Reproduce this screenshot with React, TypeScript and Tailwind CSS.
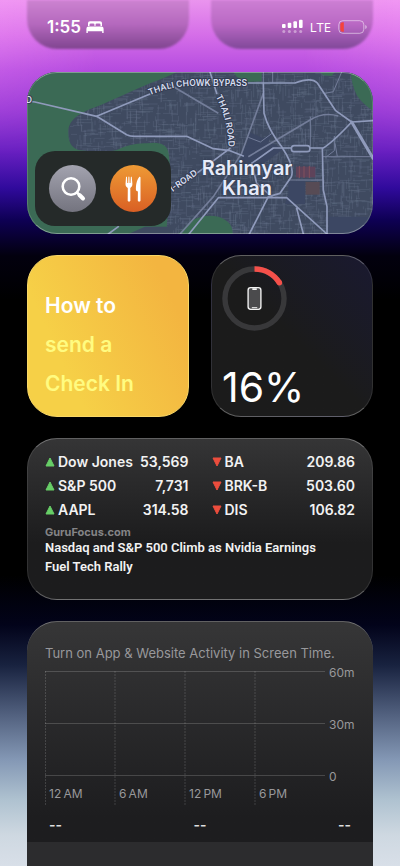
const stocksUp = [
  { symbol: 'Dow Jones', price: '53,569' },
  { symbol: 'S&P 500', price: '7,731' },
  { symbol: 'AAPL', price: '314.58' },
];

const stocksDown = [
  { symbol: 'BA', price: '209.86' },
  { symbol: 'BRK-B', price: '503.60' },
  { symbol: 'DIS', price: '106.82' },
];

// thin spaces keep the hour and the suffix close together
const hours = ['12\u2009AM', '6\u2009AM', '12\u2009PM', '6\u2009PM'];

// small street grid for the city area, seeded so it never changes
function buildStreets() {
  let seed = 7;
  const rand = () => {
    seed = (seed * 16807) % 2147483647;
    return seed / 2147483647;
  };
  let d = '';
  for (let i = 0; i < 2600; i++) {
    const x = Math.round(200 + rand() * 920);
    const y = Math.round(66 + rand() * 486);
    const len = Math.round(8 + rand() * 36);
    d += rand() > 0.5 ? `M${x} ${y}h${len}` : `M${x} ${y}v${len}`;
  }
  return d;
}

const streets = buildStreets();

function CityMap() {
  return (
    <svg
      className="absolute inset-0 h-full w-full"
      viewBox="81 66 1038 486"
      preserveAspectRatio="xMidYMid slice"
      aria-hidden="true"
    >
      <rect x="81" y="66" width="1038" height="486" fill="#3f4a60" />
      <path d={streets} stroke="#65738a" strokeOpacity="0.5" strokeWidth="2" fill="none" />
      <g fill="#3c4763">
        <path d="M735 285l75-8 40 20-70 50-60-10z" />
        <path d="M865 392h50v70h-60l10-30z" />
        <path d="M985 500h134v52H985z" />
        <path d="M745 245l45 20 30-20-20 40-60 5z" />
      </g>
      <g fill="#3b6a55">
        <path d="M81 66H530Q500 82 450 100C390 125 330 155 285 172C240 188 205 210 205 245C205 275 212 290 235 300Q310 310 350 300Q395 278 440 280Q500 270 506 310L510 350L500 540L400 552H81z" />
        <path d="M700 66h85v28l-45 2-30-16z" />
        <path d="M960 66h45l-10 12-25-2z" />
        <path d="M1052 66H1119V182Q1085 160 1070 135Q1055 105 1052 66z" />
        <path d="M535 552L570 515Q610 490 655 500Q700 515 698 552z" />
      </g>
      <path d="M385 552l50-22h75l40-20-40 42z" fill="#3f4a60" />
      <rect x="888" y="350" width="58" height="32" fill="#5e435a" />
      <path d="M898 348v36M912 348v36M928 348v36" stroke="#82505c" strokeWidth="3" />
      <rect x="917" y="396" width="42" height="38" fill="#574b55" />
      <g fill="none" stroke="#737d99" strokeWidth="5" strokeLinejoin="round">
        <path d="M500 98L655 190" />
        <path d="M540 552L640 440L725 310L790 130" />
        <path d="M745 320L930 210Q970 185 1015 198" />
        <path d="M745 262l36 14 35-26M1003 258v44l-26 20" strokeWidth="3" />
        <path d="M931 200V290M818 66V98M865 390H968M968 320H1119M790 66V98M1005 280L1012 320" strokeWidth="3" />
        <path d="M1025 66L1000 125L975 130" strokeWidth="3" />
      </g>
      <g fill="none" stroke="#8f9abb" strokeWidth="5" strokeLinejoin="round" strokeLinecap="round">
        <path d="M81 153L105 156L290 199L450 132" />
        <path d="M290 199L380 254Q390 259 405 259H560L640 296L690 302L730 318" />
        <path d="M745 99H885Q935 80 952 99L1007 182L1055 216L1119 212" />
        <path d="M1055 216L1119 325" strokeWidth="9" />
        <path d="M1055 216Q1000 275 970 294H820L755 340" />
        <path d="M790 99L792 190Q805 240 845 290Q885 350 874 380L840 430L805 440L748 552" />
        <path d="M630 66L650 130M690 295L590 370" />
        <path d="M967 296L970 420L981 470V552" />
        <path d="M567 552L655 443H860L981 552M890 475L910 552" />
        <path d="M755 340L770 400L815 440" />
        <path d="M325 552L355 530" />
      </g>
      <rect x="874" y="287" width="56" height="18" rx="9" fill="#3f4a60" stroke="#8f9abb" strokeWidth="5" />
      <defs>
        <path id="bypass" d="M449 136Q510 110 570 108L800 108" />
        <path id="thali" d="M647 140Q686 210 686 310" />
        <path id="road" d="M518 426L620 354" />
      </defs>
      <g
        fill="#d8def0"
        stroke="#333c52"
        strokeWidth="6"
        paintOrder="stroke"
        strokeLinejoin="round"
        className="font-['Inter',sans-serif] text-[26px] font-semibold"
      >
        <text><textPath href="#bypass">THALI CHOWK BYPASS</textPath></text>
        <text><textPath href="#thali">THALI ROAD</textPath></text>
        <text><textPath href="#road">I-ROAD</textPath></text>
        <text x="77" y="159">D</text>
      </g>
    </svg>
  );
}

function MapWidget() {
  return (
    <section className="relative flex h-[162px] items-end overflow-hidden rounded-[30px] p-2">
      <CityMap />
      <div className="relative flex h-[75px] w-[136px] items-center justify-center gap-[14px] rounded-[20px] bg-[#252a29]">
        <button
          aria-label="Search"
          className="flex size-[47px] items-center justify-center rounded-full bg-linear-to-b from-[#a3a3af] to-[#74747f]"
        >
          <svg className="size-[26px]" viewBox="0 0 26 26" fill="none" stroke="#fff" strokeLinecap="round" aria-hidden="true">
            <circle cx="11" cy="10.500" r="8.300" strokeWidth="2.600" />
            <path d="M17 16.500l2 2" strokeWidth="2.600" />
            <path d="M19.500 19l3.500 3.500" strokeWidth="4" />
          </svg>
        </button>
        <button
          aria-label="Restaurants"
          className="flex size-[47px] items-center justify-center rounded-full bg-linear-to-b from-[#ee9a35] to-[#d95f24]"
        >
          <svg className="size-[26px]" viewBox="0 0 26 26" fill="#fff" aria-hidden="true">
            <path d="M5 1.200C5 .6 5.900.6 6 1.200L6.300 7h.9L7.400 1.100c0-.7 1-.7 1 0L8.600 7h.9L9.800 1.200C9.900.6 10.800.6 10.800 1.200L11.400 8c0 2.300-1 3.200-2.100 3.900L9.400 24.500c0 1.500-2.700 1.500-2.700 0l.1-12.600C5.500 11.200 4.500 10.200 4.500 8z" />
            <path d="M19.500 1.500V24.500c0 1.500-2.700 1.500-2.700 0l.1-9-1.900-1c-.4-5 .7-10.500 3.200-13.500.5-.5 1.300-.3 1.300.5z" />
          </svg>
        </button>
      </div>
      <h2 className="absolute top-[86px] left-[220px] -translate-x-1/2 text-center text-[20px] leading-5 font-semibold text-[#e6ebfa] [text-shadow:0_0_2px_#333c52,0_0_3px_#333c52]">
        Rahimyar
        <br />
        Khan
      </h2>
      <div className="pointer-events-none absolute inset-0 rounded-[30px] border border-x-white/15 border-y-white/35" />
    </section>
  );
}

function TipWidget() {
  return (
    <section className="h-[162px] rounded-[30px] border border-[#f9d766] bg-[linear-gradient(65deg,#f6d047_25%,#f3b540_85%)] px-[17px] pt-[30px] text-[21px] leading-[39px] font-semibold text-[#fffb80]">
      <p className="text-white">How to</p>
      <p>send a</p>
      <p>Check In</p>
    </section>
  );
}

function BatteryWidget() {
  return (
    <section className="flex h-[162px] flex-col justify-between rounded-[30px] border border-x-white/10 border-y-white/30 bg-linear-to-tr from-[#1b1b1b] from-50% to-[#1a1930] px-[10px] pt-[10px] pb-[8px]">
      <svg className="size-[65px]" viewBox="0 0 66 66" fill="none" role="img" aria-label="iPhone battery">
        <circle cx="33" cy="33" r="30" stroke="#38383a" strokeWidth="5.500" />
        <path d="M33 3A30 30 0 0 1 58.300 17" stroke="#f5504a" strokeWidth="5.500" />
        <circle cx="58.300" cy="17" r="2.750" fill="#f5504a" />
        <rect x="26.500" y="22" width="13" height="22" rx="2.500" fill="#4b4b4d" stroke="#f2f2f2" strokeWidth="1.400" />
        <path d="M30.800 23.500h4.500" stroke="#f2f2f2" strokeWidth="1.800" />
        <path d="M30.300 42.300h5.500" stroke="#f2f2f2" strokeWidth="1" />
      </svg>
      <p className="text-[41px] leading-[42px] text-white">16%</p>
    </section>
  );
}

function StockTable({ rows, up }: { rows: { symbol: string; price: string }[]; up: boolean }) {
  return (
    <table className="w-full text-[14px] leading-6 font-semibold text-[#f2f2f2]">
      <tbody>
        {rows.map((row) => (
          <tr key={row.symbol}>
            <td className="p-0">
              <span className="flex items-center gap-[3px] whitespace-nowrap">
                <svg className="size-[10px]" viewBox="0 0 10 10" role="img" aria-label={up ? 'Up' : 'Down'}>
                  {up ? (
                    <path d="M5 1L9 9H1z" fill="#67ce67" stroke="#67ce67" strokeLinejoin="round" />
                  ) : (
                    <path d="M1 1h8L5 9z" fill="#ec4d3d" stroke="#ec4d3d" strokeLinejoin="round" />
                  )}
                </svg>
                {row.symbol}
              </span>
            </td>
            <td className="p-0 text-right">{row.price}</td>
          </tr>
        ))}
      </tbody>
    </table>
  );
}

function StocksWidget() {
  return (
    <section className="h-[162px] rounded-[30px] border border-x-white/10 border-y-white/30 bg-linear-to-b from-[#353536] to-[#1c1c1d] to-65% px-[17px] pt-[11px]">
      <div className="grid grid-cols-2 gap-[23px]">
        <StockTable rows={stocksUp} up />
        <StockTable rows={stocksDown} up={false} />
      </div>
      <p className="mt-1 text-[11px] leading-3 font-bold text-[#848486]">GuruFocus.com</p>
      <a href="#news" className="block font-['Roboto',sans-serif] text-[13px] leading-[19px] font-semibold text-[#f2f2f2]">
        Nasdaq and S&amp;P 500 Climb as Nvidia Earnings
        <br />
        Fuel Tech Rally
      </a>
    </section>
  );
}

function ScreenTimeWidget() {
  return (
    <section className="flex flex-1 flex-col overflow-hidden rounded-t-[30px] border-t border-white/30 bg-linear-to-b from-[#363637] to-[#1d1d1f] to-80%">
      <div className="px-[18px] pt-[21px]">
        <h2 className="text-[13px] leading-5 whitespace-nowrap text-[#98989b]">
          Turn on App &amp; Website Activity in Screen Time.
        </h2>
        <div className="mt-[8px] flex gap-1 text-[12px] text-[#98989b]">
          <div className="relative flex-1">
            <svg className="absolute inset-0 h-full w-full" stroke="#fff" aria-hidden="true">
              <g strokeOpacity="0.17">
                <line x1="0" y1="0.5" x2="100%" y2="0.5" />
                <line x1="0" y1="52.5" x2="100%" y2="52.5" />
                <line x1="0" y1="104.5" x2="100%" y2="104.5" />
              </g>
              <g strokeOpacity="0.15" strokeDasharray="2 1">
                <line x1="0.5" y1="0" x2="0.5" y2="100%" />
                <line x1="25%" y1="0" x2="25%" y2="100%" />
                <line x1="50%" y1="0" x2="50%" y2="100%" />
                <line x1="75%" y1="0" x2="75%" y2="100%" />
              </g>
            </svg>
            <div className="grid grid-cols-4 pt-[114px] pb-[2px] leading-[18px]">
              {hours.map((hour) => (
                <span key={hour} className="pl-1">{hour}</span>
              ))}
            </div>
          </div>
          <div className="-mt-2 flex w-[26px] flex-col gap-[32px] leading-5">
            <span>60m</span>
            <span>30m</span>
            <span>0</span>
          </div>
        </div>
        <div className="flex justify-between px-1 pt-[10px] pb-[7px] text-[14px] leading-5 font-semibold text-[#dededf]">
          <span>--</span>
          <span>--</span>
          <span>--</span>
        </div>
      </div>
      <div className="flex-1 bg-[#2c2c2e]" />
    </section>
  );
}

function StatusBar() {
  return (
    <header className="absolute inset-x-0 top-0 flex items-center justify-between pt-[17px] pr-[33px] pl-[47px] text-white">
      <div className="flex items-center gap-[5px]">
        <time className="text-[17px] leading-5 font-semibold">1:55</time>
        <svg className="h-3 w-[18px]" viewBox="0 0 18 12" fill="#fff" role="img" aria-label="Sleep focus">
          <path d="M2 5V2Q2 .2 4 .2H14Q16 .2 16 2V5H14.500V3.800Q14.500 2.500 13.200 2.500H10.800Q9.500 2.500 9.500 3.800V5H8.500V3.800Q8.500 2.500 7.200 2.500H4.800Q3.500 2.500 3.500 3.800V5z" />
          <path d="M2.500 5.500H15.500Q17.600 5.500 17.600 7.800V12H16.200V10.200H1.800V12H.4V7.800Q.4 5.500 2.500 5.500z" />
        </svg>
      </div>
      <div className="flex items-center gap-[7px]">
        <svg className="h-[16px] w-[21px]" viewBox="0 0 21 16" fill="#fff" role="img" aria-label="Signal">
          <rect x="0" y="5" width="3.600" height="4" rx="1" />
          <rect x="5.700" y="3.800" width="3.600" height="5.200" rx="1" />
          <rect x="11.400" y="2.200" width="3.600" height="6.800" rx="1" />
          <rect x="17" y="0.800" width="3.600" height="8.200" rx="1" />
          <g opacity="0.4">
            <circle cx="1.800" cy="12.500" r="1.500" />
            <circle cx="7.400" cy="12.500" r="1.500" />
            <circle cx="13.100" cy="12.500" r="1.500" />
            <circle cx="18.700" cy="12.500" r="1.500" />
          </g>
        </svg>
        <span className="font-['Open_Sans',sans-serif] text-[13px] leading-5 font-medium">LTE</span>
        <svg className="h-[14px] w-[29px]" viewBox="0 0 29 14" fill="none" role="img" aria-label="Battery low">
          <rect x="0.800" y="0.700" width="25" height="12.600" rx="4" stroke="#fff" strokeOpacity="0.5" />
          <path d="M4.500 2.300H5.800V11.700H4.500Q2.300 11.700 2.300 9.500V4.500Q2.300 2.300 4.500 2.300z" fill="#f4433c" />
          <path d="M27.300 5Q28.700 5.500 28.700 7T27.300 9z" fill="#fff" fillOpacity="0.6" />
        </svg>
      </div>
    </header>
  );
}

export default function App() {
  return (
    <main className="relative flex min-h-screen flex-col gap-[21px] bg-[linear-gradient(to_bottom,#ea94ee_0px,#d56ee8_35px,#b54ce0_70px,#9637d5_110px,#6a20c2_150px,#300a9c_188px,#0e0054_220px,#02000e_256px,#000_300px,#000_575px,#02031a_625px,#18223f_665px,#52617f_715px,#8498b5_760px,#afc2d0_800px,#ced8e1_835px,#d8dfe8_866px)] px-[27px] font-['Inter',sans-serif]">
      <div className="pointer-events-none absolute inset-x-0 top-0 h-[260px] bg-[linear-gradient(to_right,#ff9cff55,transparent_25%,transparent_75%,#ff9cff55)] [mask-image:linear-gradient(#000,transparent_60%)]" />
      <div className="relative mb-[2px] grid grid-cols-2 gap-[22px]">
        <div className="h-[49px] rounded-b-[30px] bg-linear-to-b from-[#cd83d1] via-[#b468bd] to-[#804590] blur-[1px]" />
        <div className="h-[49px] rounded-b-[30px] bg-linear-to-b from-[#cd80d4] via-[#b968c4] to-[#804899] blur-[1px]" />
      </div>
      <StatusBar />
      <MapWidget />
      <div className="grid grid-cols-2 gap-[22px]">
        <TipWidget />
        <BatteryWidget />
      </div>
      <StocksWidget />
      <ScreenTimeWidget />
    </main>
  );
}
